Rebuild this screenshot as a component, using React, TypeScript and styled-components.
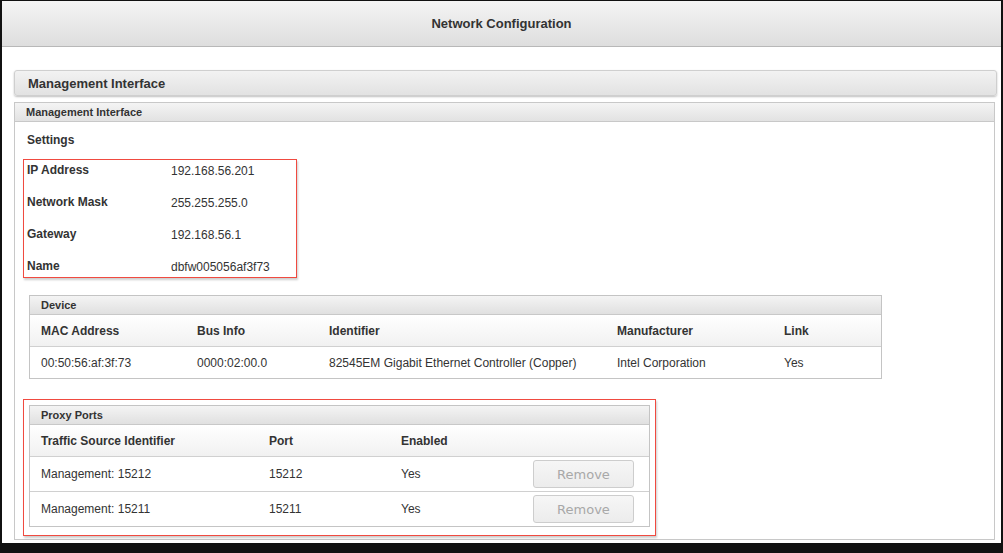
import React from 'react';
import styled, { createGlobalStyle } from 'styled-components';

const GlobalStyle = createGlobalStyle`
  html, body {
    margin: 0;
    padding: 0;
    background: #fff;
  }
  body {
    font-family: "Liberation Sans", Arial, sans-serif;
    color: #333;
  }
`;

/*** FRAME ***/
const Frame = styled.div`
  width: 1003px;
  height: 553px;
  box-sizing: border-box;
  border-top: 1px solid #111;
  border-left: 2px solid #111;
  border-right: 2px solid #111;
  border-bottom: 10px solid #111;
  background: #fff;
  display: flex;
  flex-direction: column;
`;

const TitleBar = styled.div`
  height: 46px;
  box-sizing: border-box;
  padding-bottom: 1px;
  flex: none;
  display: flex;
  align-items: center;
  justify-content: center;
  background: linear-gradient(#f4f4f4, #dedede);
  border-bottom: 1px solid #b8b8b8;
  font-size: 13px;
  font-weight: bold;
  color: #333;
`;

const Content = styled.div`
  flex: 1;
  padding: 23px 4px 0 12px;
  display: flex;
  flex-direction: column;
  gap: 6px;
`;

const SectionBar = styled.div`
  height: 24px;
  display: flex;
  align-items: center;
  padding-left: 13px;
  border: 1px solid #cfcfcf;
  border-radius: 3px;
  background: linear-gradient(#f2f2f2, #e2e2e2);
  box-shadow: 0 1px 2px rgba(0, 0, 0, 0.25);
  font-size: 13px;
  font-weight: bold;
  color: #333;
`;

/*** PANEL ***/
const Panel = styled.div`
  margin-right: 2px;
  height: 438px;
  box-sizing: border-box;
  border: 1px solid #c8c8c8;
  display: flex;
  flex-direction: column;
`;

const PanelHead = styled.div`
  height: 18px;
  display: flex;
  align-items: center;
  padding-left: 11px;
  background: linear-gradient(#f4f4f4, #e2e2e2);
  border-bottom: 1px solid #c8c8c8;
  font-size: 11px;
  font-weight: bold;
  color: #333;
`;

const PanelBody = styled.div`
  padding: 10px 0 0 8px;
  display: flex;
  flex-direction: column;
  align-items: flex-start;
`;

const SubTitle = styled.div`
  font-size: 12px;
  font-weight: bold;
  line-height: 16px;
  padding-left: 4px;
  margin-bottom: 11px;
`;

/*** HIGHLIGHT BOXES (red outline) ***/
const SettingsHighlight = styled.div`
  border: 1px solid rgb(240, 74, 64);
  box-shadow: 1px 2px 2px rgba(0, 0, 0, 0.2);
  padding: 1px;
`;

const ProxyHighlight = styled.div`
  margin-top: 20px;
  border: 1px solid rgb(240, 74, 64);
  box-shadow: 1px 2px 2px rgba(0, 0, 0, 0.2);
  padding: 5px 5px 8px 5px;
  background: #fff;
`;

const SettingsList = styled.div`
  width: 270px;
  box-sizing: border-box;
  padding: 1px 3px 0 2px;
  display: flex;
  flex-direction: column;
  gap: 14px;
`;

const SettingRow = styled.div`
  display: flex;
  line-height: 18px;
  font-size: 12px;
`;

const SettingLabel = styled.span`
  width: 144px;
  font-weight: bold;
  position: relative;
  top: -1px;
`;

const SettingValue = styled.span`
  color: #333;
`;

/*** TABLES ***/
const TableBox = styled.div<{ width: number }>`
  width: ${(p) => p.width}px;
  box-sizing: border-box;
  border: 1px solid #c4c4c4;
  background: #fff;
`;

const Caption = styled.div`
  height: 18px;
  display: flex;
  align-items: center;
  padding-left: 11px;
  background: linear-gradient(#f4f4f4, #e0e0e0);
  border-bottom: 1px solid #c8c8c8;
  font-size: 11px;
  font-weight: bold;
`;

const Row = styled.div<{ cols: string; h: number; head?: boolean }>`
  display: grid;
  grid-template-columns: ${(p) => p.cols};
  height: ${(p) => p.h}px;
  align-items: center;
  font-size: 12px;
  font-weight: ${(p) => (p.head ? 'bold' : 'normal')};
  background: ${(p) => (p.head ? 'linear-gradient(#fff, #f1f1f1)' : '#fff')};
  border-bottom: 1px solid #d0d0d0;
  &:last-child {
    border-bottom: none;
  }
`;

const Cell = styled.div`
  padding-left: 11px;
  white-space: nowrap;
`;

const RemoveButton = styled.button`
  width: 101px;
  height: 28px;
  box-sizing: border-box;
  border: 1px solid #cdcdcd;
  border-radius: 3px;
  background: linear-gradient(#f6f6f6, #ececec);
  color: #a8a8a8;
  font-family: "DejaVu Sans", sans-serif;
  font-size: 13px;
  cursor: default;
`;

const DeviceWrap = styled.div`
  margin: 17px 0 0 6px;
`;

const deviceCols = '156px 132px 288px 167px 1fr';
const proxyCols = '228px 132px 132px 1fr';

const proxyRows = [
  { id: 'Management: 15212', port: '15212', enabled: 'Yes' },
  { id: 'Management: 15211', port: '15211', enabled: 'Yes' },
];

const settings = [
  ['IP Address', '192.168.56.201'],
  ['Network Mask', '255.255.255.0'],
  ['Gateway', '192.168.56.1'],
  ['Name', 'dbfw005056af3f73'],
];

export default function App() {
  return (
    <>
      <GlobalStyle />
      <Frame>
        <TitleBar>Network Configuration</TitleBar>
        <Content>
          <SectionBar>Management Interface</SectionBar>
          <Panel>
            <PanelHead>Management Interface</PanelHead>
            <PanelBody>
              <SubTitle>Settings</SubTitle>
              <SettingsHighlight>
                <SettingsList>
                  {settings.map(([k, v]) => (
                    <SettingRow key={k}>
                      <SettingLabel>{k}</SettingLabel>
                      <SettingValue>{v}</SettingValue>
                    </SettingRow>
                  ))}
                </SettingsList>
              </SettingsHighlight>

              <DeviceWrap>
                <TableBox width={853}>
                  <Caption>Device</Caption>
                  <Row cols={deviceCols} h={31} head>
                    <Cell>MAC Address</Cell>
                    <Cell>Bus Info</Cell>
                    <Cell>Identifier</Cell>
                    <Cell>Manufacturer</Cell>
                    <Cell>Link</Cell>
                  </Row>
                  <Row cols={deviceCols} h={31}>
                    <Cell>00:50:56:af:3f:73</Cell>
                    <Cell>0000:02:00.0</Cell>
                    <Cell>82545EM Gigabit Ethernet Controller (Copper)</Cell>
                    <Cell>Intel Corporation</Cell>
                    <Cell>Yes</Cell>
                  </Row>
                </TableBox>
              </DeviceWrap>

              <ProxyHighlight>
                <TableBox width={621}>
                  <Caption>Proxy Ports</Caption>
                  <Row cols={proxyCols} h={31} head>
                    <Cell>Traffic Source Identifier</Cell>
                    <Cell>Port</Cell>
                    <Cell>Enabled</Cell>
                    <Cell />
                  </Row>
                  {proxyRows.map((r) => (
                    <Row key={r.id} cols={proxyCols} h={34}>
                      <Cell>{r.id}</Cell>
                      <Cell>{r.port}</Cell>
                      <Cell>{r.enabled}</Cell>
                      <Cell>
                        <RemoveButton>Remove</RemoveButton>
                      </Cell>
                    </Row>
                  ))}
                </TableBox>
              </ProxyHighlight>
            </PanelBody>
          </Panel>
        </Content>
      </Frame>
    </>
  );
}
